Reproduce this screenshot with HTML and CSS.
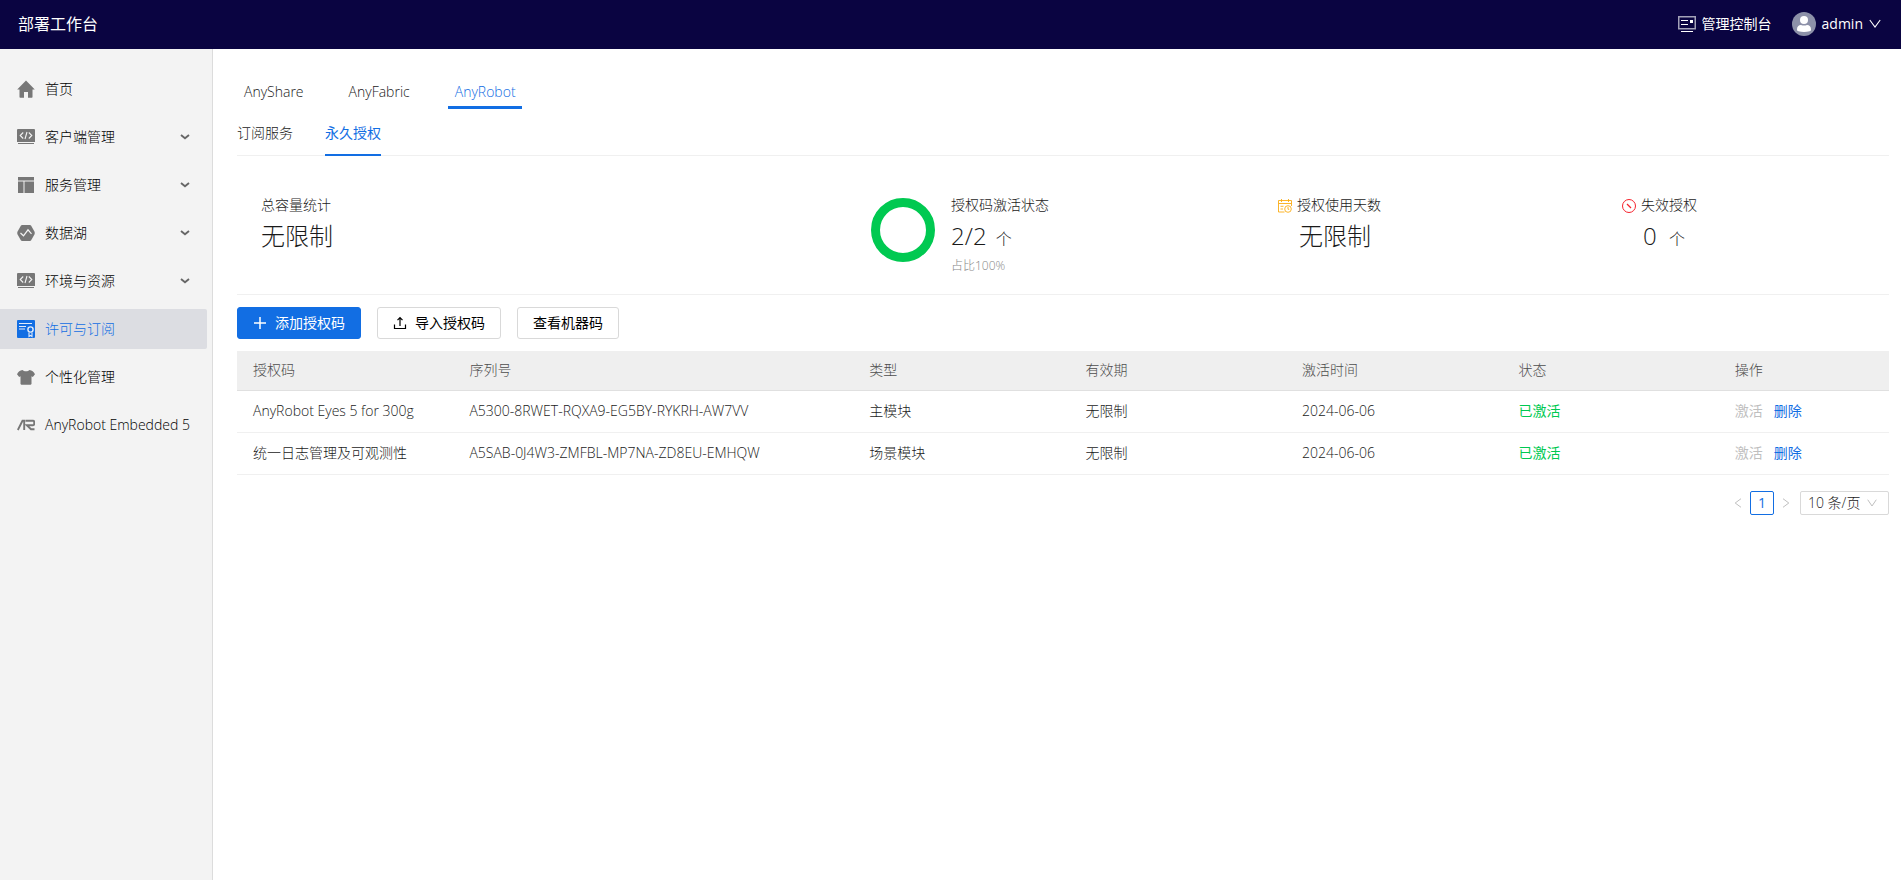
FILE: index.html
```html
<!DOCTYPE html>
<html lang="zh-CN">
<head>
<meta charset="utf-8">
<meta name="viewport" content="width=device-width, initial-scale=1">
<title>部署工作台</title>
<link rel="stylesheet" href="styles.css">
</head>
<body>
<svg class="sprite" aria-hidden="true">
  <symbol id="i-code" viewBox="0 0 18 18"><path fill="currentColor" d="M1 1h16a1 1 0 0 1 1 1v12H0V2a1 1 0 0 1 1-1zM1 15h16v1H1z"/><path d="M6.200 4.500 3.200 7.500l3 3M11.800 4.500l3 3-3 3M10 4 8 11" fill="none" stroke="#f3f3f3" stroke-width="1.100"/></symbol>
  <symbol id="i-down" viewBox="0 0 10 6"><path d="M1 1l4 3.200L9 1" fill="none" stroke="currentColor" stroke-width="1.900"/></symbol>
</svg>
<header class="topbar">
  <h1 class="brand">部署工作台</h1>
  <div class="topbar-right">
    <a class="console" href="#">
      <svg class="icon18" viewBox="0 0 18 18" fill="none"><rect x=".75" y="1.750" width="16.500" height="12" stroke="#a3a2b8" stroke-width="1.500"/><path d="M3 5.500h7M3 9.500h7M3 16.500h12" stroke="#fff"/><path d="M12 5h3v3h-3z" fill="#fff"/></svg>
      管理控制台</a>
    <button class="user" type="button">
      <svg class="avatar" viewBox="0 0 24 24"><circle cx="12" cy="12" r="12" fill="#8d91a9"/><circle cx="12" cy="8" r="4" fill="#fff"/><path d="M5 17.500c0-3 1.500-4.500 4-4.500 2 .7 4 .7 6 0 2.500 0 4 1.500 4 4.500 0 1-.5 1.500-1.500 1.800-3.500.9-7.500.9-11 0C5.500 19 5 18.500 5 17.500z" fill="#fff"/></svg>
      admin
      <svg class="caret" viewBox="0 0 12 10"><path d="M.8 1 6 8l5.200-7" fill="none" stroke="#fff" stroke-width="1.100"/></svg>
    </button>
  </div>
</header>
<div class="layout">
  <nav class="sidebar">
    <a class="nav-item" href="#"><svg class="icon18" viewBox="0 0 18 18"><path fill="currentColor" d="M9 .5 17.800 9.500H15.500V17a.7.7 0 0 1-.7.7H11V12H7v5.700H3.200a.7.7 0 0 1-.7-.7V9.500H.2z"/></svg><span>首页</span></a>
    <a class="nav-item" href="#"><svg class="icon18"><use href="#i-code"/></svg><span>客户端管理</span><svg class="arrow"><use href="#i-down"/></svg></a>
    <a class="nav-item" href="#"><svg class="icon18" viewBox="0 0 18 18"><path fill="currentColor" d="M1 1h16v3.500H1zM1 5.500h5.500V17H1zM7.500 5.500H17V17H7.500z"/></svg><span>服务管理</span><svg class="arrow"><use href="#i-down"/></svg></a>
    <a class="nav-item" href="#"><svg class="icon18" viewBox="0 0 18 18"><path fill="currentColor" d="M5 1h8l1 .6 3.700 6.400v2L14 16.400l-1 .6H5l-1-.6L.3 10V8L4 1.600z"/><path d="M3.500 9 6.500 11.800 11 5.800l3.500 4" fill="none" stroke="#f3f3f3" stroke-width="1.200"/></svg><span>数据湖</span><svg class="arrow"><use href="#i-down"/></svg></a>
    <a class="nav-item" href="#"><svg class="icon18"><use href="#i-code"/></svg><span>环境与资源</span><svg class="arrow"><use href="#i-down"/></svg></a>
    <a class="nav-item active" href="#" aria-current="page"><svg class="icon18" viewBox="0 0 18 18"><rect width="18" height="18" rx="1" fill="currentColor"/><path d="M2 3.500h13M2 6.500h7M2 9h6M12 12.500v4l1.500-1 1.500 1v-4" fill="none" stroke="#e3ecf9" stroke-width="1.100"/><circle cx="13.500" cy="9.500" r="2.600" fill="none" stroke="#e3ecf9" stroke-width="1.400"/></svg><span>许可与订阅</span></a>
    <a class="nav-item" href="#"><svg class="icon18" viewBox="0 0 18 18"><path fill="currentColor" d="M5.500 2c1.500 1.700 5.500 1.700 7 0 2.500.2 4.200 1.800 5.500 4.200L15.800 9 14.500 8.200V16l-.8.8H4.300L3.500 16V8.200L2.200 9 0 6.200C1.300 3.800 3 2.200 5.500 2z"/></svg><span>个性化管理</span></a>
    <a class="nav-item" href="#"><svg class="icon18" viewBox="0 0 18 18"><path d="M.8 14 5.500 4.800H7.200V14M8.500 4.800H16q1.200 0 1.200 1.200v2q0 1.200-1.200 1.200H9.800L14 13.200h3.500" fill="none" stroke="currentColor" stroke-width="1.900"/></svg><span>AnyRobot Embedded 5</span></a>
  </nav>
  <main class="content">
    <div class="tabs" role="tablist">
      <button type="button" role="tab" class="tab">AnyShare</button>
      <button type="button" role="tab" class="tab">AnyFabric</button>
      <button type="button" role="tab" class="tab active" aria-selected="true">AnyRobot</button>
    </div>
    <div class="subtabs" role="tablist">
      <button type="button" role="tab" class="subtab">订阅服务</button>
      <button type="button" role="tab" class="subtab active" aria-selected="true">永久授权</button>
    </div>
    <section class="stats">
      <div class="stat">
        <div class="stat-label">总容量统计</div>
        <div class="stat-value">无限制</div>
      </div>
      <div class="stat with-ring">
        <svg class="ring" viewBox="0 0 64 64"><circle cx="32" cy="32" r="27.500" fill="none" stroke="#00c951" stroke-width="9"/></svg>
        <div>
          <div class="stat-label">授权码激活状态</div>
          <div class="stat-value">2/2 <span class="unit">个</span></div>
          <div class="stat-note">占比100%</div>
        </div>
      </div>
      <div class="stat with-icon">
        <svg class="icon14" viewBox="0 0 14 14" fill="none" stroke="#faad14" stroke-width=".9"><path d="M6.500 13H.5V1.500h13V7M.5 4.500h13M3.500 0v3M10.500 0v3M2.500 7.300h3M2.500 10h2.500"/><circle cx="10" cy="10" r="3.300"/><path d="M10 8v2.300h1.200"/></svg>
        <div>
          <div class="stat-label">授权使用天数</div>
          <div class="stat-value inset">无限制</div>
        </div>
      </div>
      <div class="stat with-icon">
        <svg class="icon14" viewBox="0 0 14 14" fill="none" stroke="#f5222d"><circle cx="7" cy="7" r="6.500"/><path d="m5 5 4 4" stroke-width="1.200"/></svg>
        <div>
          <div class="stat-label">失效授权</div>
          <div class="stat-value inset">0 <span class="unit wide">个</span></div>
        </div>
      </div>
    </section>
    <div class="actions">
      <button type="button" class="btn primary"><svg class="icon14" viewBox="0 0 14 14"><path d="M7 1v12M1 7h12" stroke="currentColor" stroke-width="1.500"/></svg>添加授权码</button>
      <button type="button" class="btn"><svg class="icon14" viewBox="0 0 14 14"><path d="M1.500 8.500v4h11v-4M7 10V2M4.500 4.200 7 1.700l2.500 2.500" fill="none" stroke="currentColor" stroke-width="1.200"/></svg>导入授权码</button>
      <button type="button" class="btn">查看机器码</button>
    </div>
    <table class="licenses">
      <colgroup><col class="c"><col class="c-serial"><col class="c"><col class="c"><col class="c"><col class="c"><col></colgroup>
      <thead><tr><th>授权码</th><th>序列号</th><th>类型</th><th>有效期</th><th>激活时间</th><th>状态</th><th>操作</th></tr></thead>
      <tbody>
        <tr><td>AnyRobot Eyes 5 for 300g</td><td>A5300-8RWET-RQXA9-EG5BY-RYKRH-AW7VV</td><td>主模块</td><td>无限制</td><td>2024-06-06</td><td class="ok">已激活</td><td><div class="ops"><button type="button" class="link" disabled>激活</button><button type="button" class="link">删除</button></div></td></tr>
        <tr><td>统一日志管理及可观测性</td><td>A5SAB-0J4W3-ZMFBL-MP7NA-ZD8EU-EMHQW</td><td>场景模块</td><td>无限制</td><td>2024-06-06</td><td class="ok">已激活</td><td><div class="ops"><button type="button" class="link" disabled>激活</button><button type="button" class="link">删除</button></div></td></tr>
      </tbody>
    </table>
    <div class="pager">
      <button type="button" class="page step" aria-label="上一页" disabled><svg class="step-icon" viewBox="0 0 8 10"><path d="M7 .7 1.200 5 7 9.300" fill="none" stroke="currentColor"/></svg></button>
      <button type="button" class="page current">1</button>
      <button type="button" class="page step" aria-label="下一页" disabled><svg class="step-icon" viewBox="0 0 8 10"><path d="M1 .7 6.800 5 1 9.300" fill="none" stroke="currentColor"/></svg></button>
      <div class="size">
        <select aria-label="每页条数"><option>10 条/页</option><option>20 条/页</option></select>
        <svg class="size-arrow" viewBox="0 0 10 8"><path d="M.7.700 5 7 9.300.7" fill="none" stroke="currentColor"/></svg>
      </div>
    </div>
  </main>
</div>
</body>
</html>
```
FILE: styles.css
```css
* { box-sizing: border-box; }
body {
  margin: 0;
  min-height: 100vh;
  display: flex;
  flex-direction: column;
  font-family: "Open Sans", "Noto Sans CJK SC", sans-serif;
  font-size: 14px;
  font-weight: 300;
  line-height: 22px;
  color: #1a1a1a;
  background: #fff;
}
button, select { font: inherit; color: inherit; }
button { border: 0; background: none; padding: 0; cursor: pointer; white-space: nowrap; }
a { color: inherit; text-decoration: none; }
svg { flex: none; display: block; }
.sprite { width: 0; height: 0; position: absolute; }
.icon18 { width: 18px; height: 18px; }
.icon14 { width: 14px; height: 14px; }

.topbar {
  height: 49px;
  display: flex;
  align-items: center;
  justify-content: space-between;
  padding: 0 20px 2px 18px;
  background: #0a0441;
  color: #fff;
  font-weight: 400;
}
.brand { margin: 0; font-size: 16px; font-weight: 400; }
.topbar-right, .console, .user { display: flex; align-items: center; }
.topbar-right { gap: 20px; }
.console { gap: 6px; }
.user { gap: 6px; }
.avatar { width: 24px; height: 24px; }
.caret { width: 12px; height: 10px; }

.layout { flex: 1; display: flex; }
.sidebar {
  width: 213px;
  flex: none;
  display: flex;
  flex-direction: column;
  gap: 8px;
  padding: 20px 5px 0 0;
  background: #f3f3f3;
  border-right: 1px solid #dcdcdc;
}
.nav-item {
  height: 40px;
  display: flex;
  align-items: center;
  gap: 10px;
  padding: 0 17px;
  border-radius: 0 2px 2px 0;
  color: #000;
  white-space: nowrap;
}
.nav-item .icon18 { color: #777; }
.nav-item.active { background: #dcdde2; color: #126ee3; }
.nav-item.active .icon18 { color: #126ee3; }
.arrow { width: 10px; height: 6px; margin-left: auto; color: #666; }

.content { flex: 1; min-width: 0; padding: 26px 12px 0 24px; }
.tabs, .subtabs { display: flex; gap: 32px; }
.tab { padding: 6px 6px 3px 7px; border-bottom: 3px solid transparent; }
.subtabs { border-bottom: 1px solid #f0f0f0; }
.subtab { padding: 13px 0 10px; margin-bottom: -1px; border-bottom: 2px solid transparent; }
.tab.active, .subtab.active { color: #126ee3; border-color: #126ee3; }
.subtab.active { font-weight: 400; }

.stats {
  display: grid;
  grid-template-columns: 610fr 407fr 344fr 267fr;
  padding: 38px 0 21px 24px;
  border-bottom: 1px solid #f0f0f0;
}
.stat-value { font-size: 24px; line-height: 40px; }
.unit { font-size: 16px; margin-left: 3px; }
.unit.wide { margin-left: 6px; }
.stat-note { font-size: 12px; line-height: 14px; color: #888; }
.with-ring { display: flex; gap: 16px; }
.ring { width: 64px; height: 64px; margin-top: 4px; }
.with-icon { display: flex; gap: 5px; }
.with-icon .icon14 { margin-top: 5px; }
.inset { padding-left: 2px; }

.actions { display: flex; gap: 16px; padding: 12px 0; }
.btn {
  height: 32px;
  display: flex;
  align-items: center;
  gap: 8px;
  padding: 0 15px;
  border: 1px solid #d9d9d9;
  border-radius: 3px;
  background: #fff;
  color: #000;
  font-weight: 400;
}
.btn.primary { background: #126ee3; border-color: #126ee3; color: #fff; }

.licenses { width: 100%; border-collapse: collapse; table-layout: fixed; }
.c { width: 13.1%; }
.c-serial { width: 24.2%; }
.licenses th, .licenses td { height: 42px; padding: 0 16px; text-align: left; font-weight: inherit; border-bottom: 1px solid #f0f0f0; white-space: nowrap; }
.licenses th { height: 39px; background: #efefef; color: #4d4d4d; border-color: #e0e0e0; }
.licenses .ok { color: #00c951; font-weight: 400; }
.ops { display: flex; gap: 11px; }
.link { color: #126ee3; font-weight: 400; }
.link:disabled { color: #bfbfbf; }

.pager { display: flex; justify-content: flex-end; align-items: center; padding-top: 16px; }
.page { width: 24px; height: 24px; line-height: 22px; border-radius: 2px; }
.page.current { border: 1px solid #126ee3; color: #126ee3; font-weight: 400; }
.step { display: flex; align-items: center; justify-content: center; color: #bfbfbf; }
.step-icon { width: 8px; height: 10px; }
.size { position: relative; margin-left: 2px; }
.size select {
  appearance: none;
  display: block;
  width: 89px;
  height: 24px;
  line-height: 20px;
  padding: 0 7px;
  border: 1px solid #d9d9d9;
  border-radius: 2px;
  background: #fff;
}
.size-arrow { position: absolute; right: 12px; top: 8px; width: 10px; height: 8px; color: #bfbfbf; pointer-events: none; }
```
